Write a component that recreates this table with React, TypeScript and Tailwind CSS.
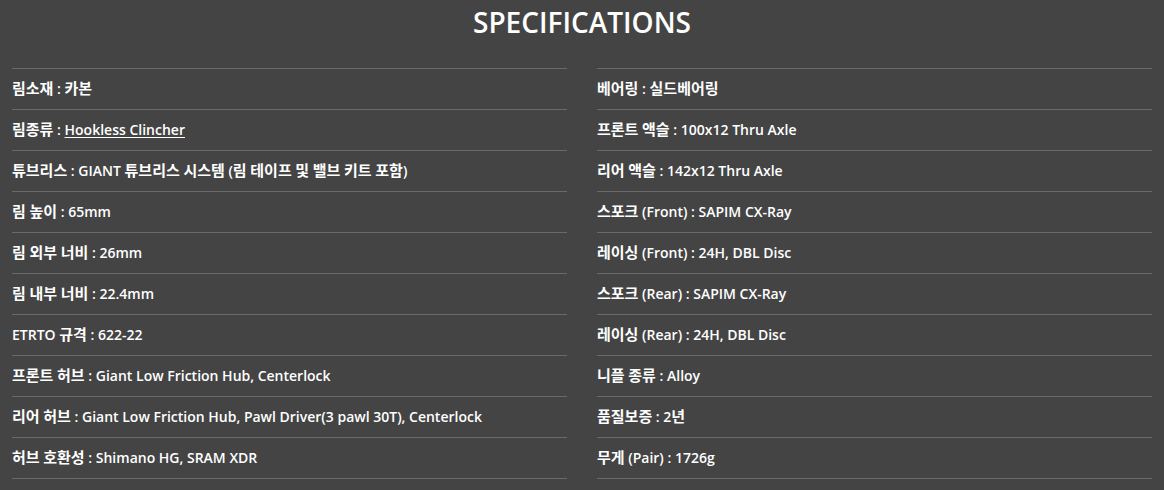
const leftSpecs: { label: string; value: string; link?: boolean }[] = [
  { label: "림소재", value: "카본" },
  { label: "림종류", value: "Hookless Clincher", link: true },
  { label: "튜브리스", value: "GIANT 튜브리스 시스템 (림 테이프 및 밸브 키트 포함)" },
  { label: "림 높이", value: "65mm" },
  { label: "림 외부 너비", value: "26mm" },
  { label: "림 내부 너비", value: "22.4mm" },
  { label: "ETRTO 규격", value: "622-22" },
  { label: "프론트 허브", value: "Giant Low Friction Hub, Centerlock" },
  { label: "리어 허브", value: "Giant Low Friction Hub, Pawl Driver(3 pawl 30T), Centerlock" },
  { label: "허브 호환성", value: "Shimano HG, SRAM XDR" },
];

const rightSpecs: { label: string; value: string; link?: boolean }[] = [
  { label: "베어링", value: "실드베어링" },
  { label: "프론트 액슬", value: "100x12 Thru Axle" },
  { label: "리어 액슬", value: "142x12 Thru Axle" },
  { label: "스포크 (Front)", value: "SAPIM CX-Ray" },
  { label: "레이싱 (Front)", value: "24H, DBL Disc" },
  { label: "스포크 (Rear)", value: "SAPIM CX-Ray" },
  { label: "레이싱 (Rear)", value: "24H, DBL Disc" },
  { label: "니플 종류", value: "Alloy" },
  { label: "품질보증", value: "2년" },
  { label: "무게 (Pair)", value: "1726g" },
];

// Hangul runs render a touch wider in the original, so bump them slightly
function Mixed({ text }: { text: string }) {
  const parts = text.split(/([\uAC00-\uD7A3]+)/);
  return (
    <>
      {parts.map((part, i) =>
        /[\uAC00-\uD7A3]/.test(part) ? (
          <span key={i} className="text-[15px] leading-none">
            {part}
          </span>
        ) : (
          part
        )
      )}
    </>
  );
}

function SpecList({ items }: { items: typeof leftSpecs }) {
  return (
    <ul className="flex flex-col border-b border-[#6a6a6a]">
      {items.map((item) => (
        <li
          key={item.label}
          className="h-[41px] pb-[2px] border-t border-[#6a6a6a] flex items-center text-[14px] font-semibold text-white"
        >
          <span>
            <Mixed text={item.label} /> :{" "}
            {item.link ? (
              <a className="underline underline-offset-2">{item.value}</a>
            ) : (
              <Mixed text={item.value} />
            )}
          </span>
        </li>
      ))}
    </ul>
  );
}

export default function App() {
  return (
    <div
      className="w-[1164px] h-[490px] bg-[#444444] px-3 overflow-hidden"
      style={{ fontFamily: '"Open Sans", "Noto Sans CJK KR", sans-serif' }}
    >
      <h2 className="h-[68px] pt-[2px] text-center text-[28px] font-semibold text-white leading-[40px]">
        SPECIFICATIONS
      </h2>
      <div className="grid grid-cols-2 gap-[30px]">
        <SpecList items={leftSpecs} />
        <SpecList items={rightSpecs} />
      </div>
    </div>
  );
}
